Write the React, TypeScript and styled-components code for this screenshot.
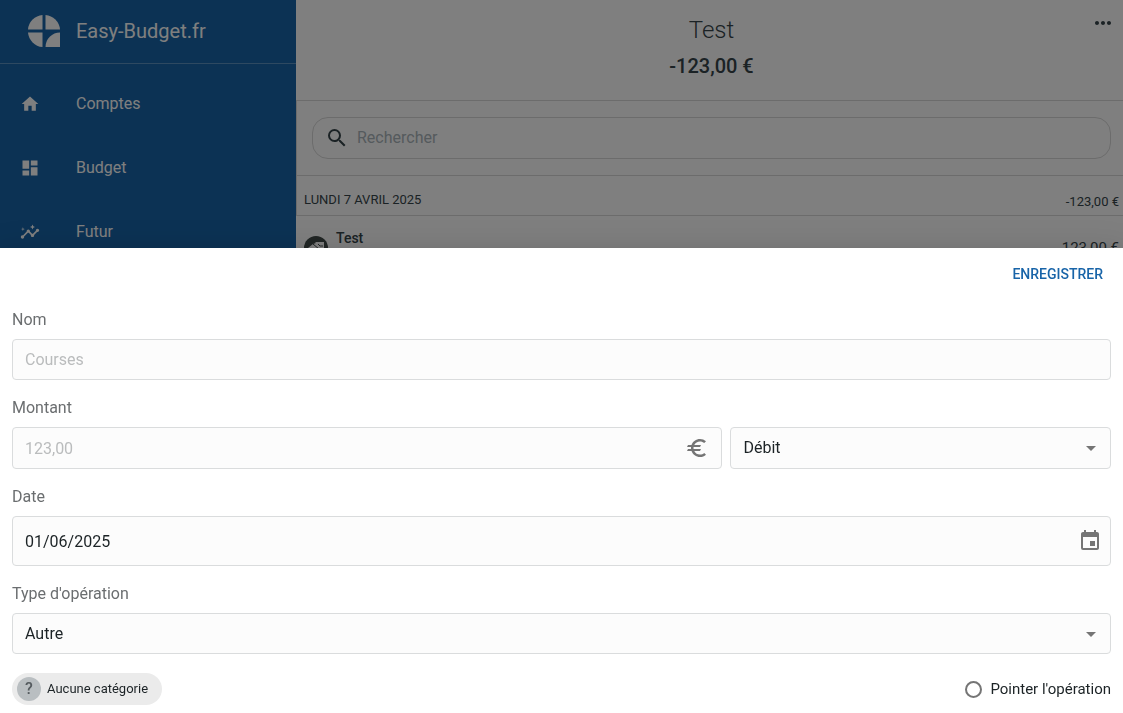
import React from "react";
import styled, { createGlobalStyle } from "styled-components";
import {
  MdArrowDropDown,
  MdDashboard,
  MdEuro,
  MdEvent,
  MdHome,
  MdInsights,
  MdMoreHoriz,
  MdSearch,
} from "react-icons/md";

const GlobalStyle = createGlobalStyle`
  *, *::before, *::after { box-sizing: border-box; }
  body {
    margin: 0;
    background: #fff;
    color: #1c2326;
    font-family: Roboto, "Liberation Sans", sans-serif;
    font-size: 16px;
    line-height: 24px;
  }
  button, input, select { font: inherit; color: inherit; margin: 0; }
`;

const Page = styled.div`
  display: flex;
  height: 100vh;
  overflow: hidden;
`;

const Sidebar = styled.aside`
  flex: 0 0 296px;
  background: #1864a8;
  color: #fff;
`;

const Brand = styled.div`
  display: flex;
  align-items: center;
  gap: 16px;
  height: 64px;
  padding: 0 28px 1px;
  border-bottom: 1px solid rgba(255, 255, 255, 0.3);
  font-size: 20px;

  svg { flex: none; }
`;

const NavList = styled.nav`
  display: flex;
  flex-direction: column;
  padding: 8px 0;
`;

const NavLink = styled.a`
  display: flex;
  align-items: center;
  gap: 36px;
  height: 64px;
  padding: 0 20px;
  color: inherit;
  text-decoration: none;
`;

const Main = styled.main`
  flex: 1;
  min-width: 0;
  color: #36454a;
`;

const AccountHeader = styled.header`
  display: grid;
  grid-template-columns: 52px 1fr 48px;
  padding: 13px 0 22px;
  text-align: center;
`;

const AccountTitle = styled.h1`
  margin: 0;
  font-size: 24px;
  font-weight: 300;
  line-height: 34px;
`;

const AccountBalance = styled.p`
  margin: 7px 0 0;
  font-size: 20px;
  font-weight: 500;
  line-height: 24px;
`;

const AccountText = styled.div`
  grid-column: 2;
`;

const IconButton = styled.button`
  display: flex;
  align-items: center;
  justify-content: flex-end;
  width: 40px;
  height: 20px;
  padding: 0;
  border: 0;
  background: none;
`;

const SearchBar = styled.div`
  padding: 16px 12px 16px 15px;
  border: solid #d8d8d8;
  border-width: 1px 0 1px 1px;
`;

const SearchBox = styled.label`
  display: flex;
  align-items: center;
  gap: 8px;
  height: 42px;
  padding: 0 12px;
  border: 1px solid #d8d8d8;
  border-radius: 16px;
`;

const SearchInput = styled.input`
  flex: 1;
  min-width: 0;
  padding: 0;
  border: 0;
  background: none;
  outline: 0;

  &::placeholder { color: #aab4ba; opacity: 1; }
`;

const DayHeader = styled.div`
  display: flex;
  align-items: flex-end;
  justify-content: space-between;
  height: 40px;
  padding: 0 4px 3px 7px;
  border: solid #d8d8d8;
  border-width: 0 0 1px 1px;
`;

const DayName = styled.span`
  font-size: 13px;
  text-transform: uppercase;
`;

const DayTotal = styled.span`
  font-size: 13px;
  line-height: 20px;
`;

const Operation = styled.div`
  display: grid;
  grid-template-columns: 24px 1fr auto;
  align-items: center;
  gap: 8px;
  height: 64px;
  padding: 0 4px;
  margin-left: 4px;
`;

const OperationName = styled.span`
  align-self: start;
  padding-top: 10px;
  font-size: 14px;
  font-weight: 500;
`;

const OperationAmount = styled.span`
  font-size: 15px;
`;

const Scrim = styled.div`
  position: fixed;
  inset: 0;
  background: rgba(0, 0, 0, 0.5);
`;

const Sheet = styled.form`
  position: fixed;
  inset: auto 0 0;
  display: flex;
  flex-direction: column;
  padding: 8px 12px;
  background: #fff;
  box-shadow: 0 8px 10px -5px rgba(0, 0, 0, 0.2), 0 16px 24px 2px rgba(0, 0, 0, 0.14),
    0 6px 30px 5px rgba(0, 0, 0, 0.12);
`;

const SaveButton = styled.button`
  align-self: flex-end;
  height: 36px;
  padding: 0 8px;
  border: 0;
  background: none;
  color: #1864a8;
  font-size: 14px;
  font-weight: 500;
  text-transform: uppercase;
`;

const Field = styled.div`
  margin-top: 16px;
`;

const Label = styled.label`
  display: block;
  margin-bottom: 8px;
  color: #6b6e70;
  line-height: 23px;
`;

const Split = styled.div`
  display: grid;
  grid-template-columns: 28fr 15fr;
  gap: 8px;
`;

const Control = styled.div<{ $height: number }>`
  display: flex;
  align-items: center;
  height: ${(p) => p.$height}px;
  border: 1px solid #dadcdd;
  border-radius: 4px;
  background: #fcfcfc;
`;

const TextInput = styled.input`
  flex: 1;
  min-width: 0;
  height: 100%;
  padding: 0 12px;
  border: 0;
  background: none;
  outline: 0;

  &::placeholder { color: #babcbd; opacity: 1; }
`;

const Adornment = styled.span<{ $end: number }>`
  display: flex;
  margin-right: ${(p) => p.$end}px;
  color: #757575;
`;

const SelectWrap = styled(Control)`
  display: grid;
  grid-template-columns: 1fr 31px;

  > * { grid-row: 1; }
  select { grid-column: 1 / 3; }
  svg {
    grid-column: 2;
    color: #757575;
    pointer-events: none;
  }
`;

const Select = styled.select`
  width: 100%;
  height: 100%;
  padding: 0 12px;
  border: 0;
  outline: 0;
  background: none;
  appearance: none;
`;

const Footer = styled.div`
  display: flex;
  align-items: center;
  justify-content: space-between;
  margin-top: 19px;
`;

const Chip = styled.button`
  display: flex;
  align-items: center;
  gap: 6px;
  height: 32px;
  padding: 0 14px 0 5px;
  border: 0;
  border-radius: 16px;
  background: #ebebeb;
  font-size: 13px;
`;

const ChipAvatar = styled.span`
  display: grid;
  place-items: center;
  width: 24px;
  height: 24px;
  border-radius: 50%;
  background: #b9bec1;
  color: #555b5f;
  font-size: 16px;
  font-weight: 500;
`;

const CheckLabel = styled.label`
  display: flex;
  align-items: center;
  gap: 8px;
  font-size: 15px;
`;

const RoundCheck = styled.input`
  width: 17px;
  height: 17px;
  border: 2px solid #757575;
  border-radius: 50%;
  appearance: none;

  &:checked { background: #1864a8; }
`;

const Logo = () => (
  <svg width="32" height="32" viewBox="0 0 32 32" fill="currentColor" aria-hidden="true">
    <path d="M14.5 0v14.5H0A16 16 0 0 1 14.5 0Z" />
    <path d="M17.5 0A16 16 0 0 1 32 14.5H17.5Z" />
    <path d="M0 17.5h14.5V32A16 16 0 0 1 0 17.5Z" />
    <path d="M32 17.5V32H17.5A14.5 14.5 0 0 1 32 17.5Z" />
  </svg>
);

const OperationIcon = () => (
  <svg width="24" height="24" viewBox="0 0 24 24" aria-hidden="true">
    <circle cx="12" cy="12" r="12" fill="#424c4a" />
    <path d="M4 12 9 8l3-1-1-1h9v10l-4 3H6Z" fill="#fff" />
    <path d="m9 8 6 5M14 8l2 2h3" fill="none" stroke="#424c4a" />
  </svg>
);

const navItems = [
  { label: "Comptes", Icon: MdHome },
  { label: "Budget", Icon: MdDashboard },
  { label: "Futur", Icon: MdInsights },
];

type SelectFieldProps = { id: string; height: number; option: string; label?: string };

const SelectField = ({ id, height, option, label }: SelectFieldProps) => (
  <SelectWrap $height={height}>
    <Select id={id} aria-label={label}>
      <option>{option}</option>
    </Select>
    <MdArrowDropDown size={24} />
  </SelectWrap>
);

export default function App() {
  return (
    <>
      <GlobalStyle />
      <Page>
        <Sidebar>
          <Brand>
            <Logo />
            Easy-Budget.fr
          </Brand>
          <NavList>
            {navItems.map(({ label, Icon }) => (
              <NavLink href="#" key={label}>
                <Icon size={20} />
                {label}
              </NavLink>
            ))}
          </NavList>
        </Sidebar>
        <Main>
          <AccountHeader>
            <AccountText>
              <AccountTitle>Test</AccountTitle>
              <AccountBalance>-123,00 €</AccountBalance>
            </AccountText>
            <IconButton type="button" aria-label="Options">
              <MdMoreHoriz size={24} />
            </IconButton>
          </AccountHeader>
          <SearchBar>
            <SearchBox>
              <MdSearch size={24} />
              <SearchInput type="search" placeholder="Rechercher" aria-label="Rechercher" />
            </SearchBox>
          </SearchBar>
          <DayHeader>
            <DayName>Lundi 7 avril 2025</DayName>
            <DayTotal>-123,00 €</DayTotal>
          </DayHeader>
          <Operation>
            <OperationIcon />
            <OperationName>Test</OperationName>
            <OperationAmount>-123,00 €</OperationAmount>
          </Operation>
        </Main>
      </Page>
      <Scrim />
      <Sheet onSubmit={(e) => e.preventDefault()}>
        <SaveButton type="submit">Enregistrer</SaveButton>
        <Field>
          <Label htmlFor="name">Nom</Label>
          <Control $height={41}>
            <TextInput id="name" placeholder="Courses" />
          </Control>
        </Field>
        <Field>
          <Label htmlFor="amount">Montant</Label>
          <Split>
            <Control $height={42}>
              <TextInput id="amount" placeholder="123,00" inputMode="decimal" />
              <Adornment $end={12}>
                <MdEuro size={24} />
              </Adornment>
            </Control>
            <SelectField id="direction" height={42} option="Débit" label="Sens" />
          </Split>
        </Field>
        <Field>
          <Label htmlFor="date">Date</Label>
          <Control $height={50}>
            <TextInput id="date" defaultValue="01/06/2025" />
            <Adornment $end={8}>
              <MdEvent size={24} />
            </Adornment>
          </Control>
        </Field>
        <Field>
          <Label htmlFor="kind">Type d'opération</Label>
          <SelectField id="kind" height={41} option="Autre" />
        </Field>
        <Footer>
          <Chip type="button">
            <ChipAvatar>?</ChipAvatar>
            Aucune catégorie
          </Chip>
          <CheckLabel>
            <RoundCheck type="checkbox" />
            Pointer l'opération
          </CheckLabel>
        </Footer>
      </Sheet>
    </>
  );
}
